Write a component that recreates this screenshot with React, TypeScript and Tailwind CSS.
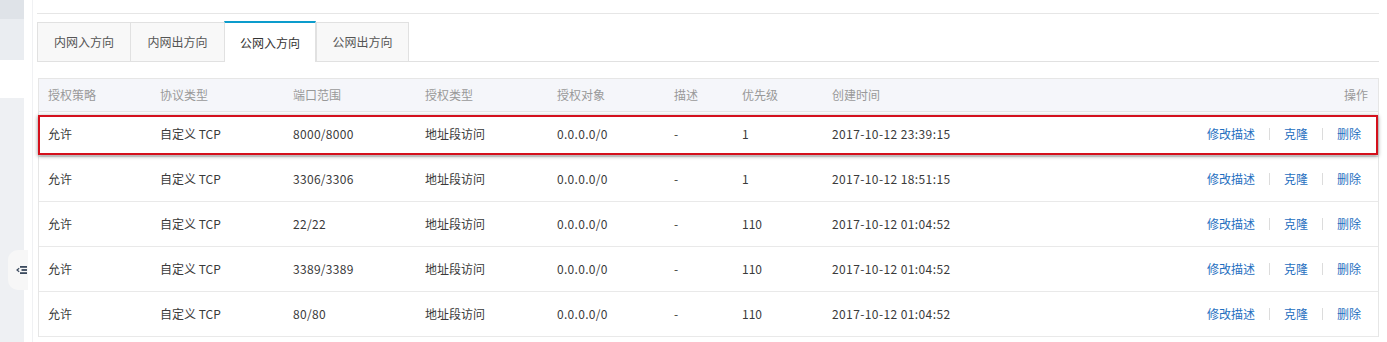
import React from "react";

const rows = [
  { port: "8000/8000", pri: "1", time: "2017-10-12 23:39:15" },
  { port: "3306/3306", pri: "1", time: "2017-10-12 18:51:15" },
  { port: "22/22", pri: "110", time: "2017-10-12 01:04:52" },
  { port: "3389/3389", pri: "110", time: "2017-10-12 01:04:52" },
  { port: "80/80", pri: "110", time: "2017-10-12 01:04:52" },
];

const cols = "grid grid-cols-[112px_133px_132px_132px_117px_68px_90px_1fr_auto] items-center pl-[9px]";

function Actions() {
  return (
    <div className="flex items-center pr-[17px] text-[#1f6fbf]">
      <span>修改描述</span>
      <span className="mx-[14px] h-[12px] w-px bg-[#dcdcdc]" />
      <span>克隆</span>
      <span className="mx-[14px] h-[12px] w-px bg-[#dcdcdc]" />
      <span>删除</span>
    </div>
  );
}

export default function App() {
  const tabs = ["内网入方向", "内网出方向", "公网入方向", "公网出方向"];
  const widths = ["w-[93px]", "w-[94px]", "w-[92px]", "w-[93px]"];
  return (
    <div
      className="flex w-[1387px] h-[342px] overflow-hidden bg-white text-[12px] text-[#3a3a3a]"
      style={{ fontFamily: '"Noto Sans CJK SC", "Liberation Sans", sans-serif' }}
    >
      <div className="flex w-[24px] flex-col">
        <div className="h-[19px] bg-[#dfe3e8]" />
        <div className="h-[41px] bg-[#eaedf1]" />
        <div className="h-[38px] bg-white" />
        <div className="relative flex-1 bg-[#eef0f3]">
          <div className="absolute left-[8px] top-[152px] flex h-[40px] w-[20px] items-center justify-end rounded-l-[10px] bg-[#f7f7f7] pr-[1px]">
            <svg width="11" height="10" viewBox="0 0 11 10">
              <rect x="4" y="1" width="7" height="1.8" fill="#3b4a5e" />
              <rect x="5.5" y="4.1" width="5.5" height="1.8" fill="#3b4a5e" />
              <rect x="4" y="7.2" width="7" height="1.8" fill="#3b4a5e" />
              <path d="M3.2 3.2 L1 5 L3.2 6.8" stroke="#3b4a5e" strokeWidth="1.2" fill="none" />
            </svg>
          </div>
        </div>
      </div>
      <div className="w-[9px] border-r border-[#f0f1f3]" />
      <div className="ml-[4px] w-[1342px]">
        <div className="mt-[13px] h-px bg-[#e6e6e6]" />
        <div className="mt-[8px] flex h-[40px] items-end border-b border-[#e1e1e1]">
          {tabs.map((t, i) =>
            i === 2 ? (
              <div
                key={t}
                className={`${widths[i]} -mb-px flex h-[41px] items-center justify-center border-x border-t-2 border-x-[#e1e1e1] border-t-[#0c9ccc] bg-white text-[#333]`}
              >
                {t}
              </div>
            ) : (
              <div
                key={t}
                className={`${widths[i]} flex h-[39px] items-center justify-center border-l border-t border-[#e1e1e1] ${i === 3 ? "border-r" : ""} bg-[#f8f8f8] text-[#555]`}
              >
                {t}
              </div>
            )
          )}
        </div>
        <div className="mt-[16px] ml-px border border-[#e6e6e6] border-b-0">
          <div className={`${cols} h-[33px] border-b border-[#e6e6e6] bg-[#f5f6fa] text-[#999]`}>
            <span>授权策略</span>
            <span>协议类型</span>
            <span>端口范围</span>
            <span>授权类型</span>
            <span>授权对象</span>
            <span>描述</span>
            <span>优先级</span>
            <span>创建时间</span>
            <span className="pr-[10px] text-right">操作</span>
          </div>
          {rows.map((r, i) => (
            <div key={i} className={`${cols} relative h-[45px] border-b border-[#e9e9e9]`}>
              {i === 0 && (
                <div className="pointer-events-none absolute -left-px right-0 top-[3px] bottom-[1px] border-2 border-[#d4101c] shadow-[0_1px_4px_rgba(0,0,0,0.45)]" />
              )}
              <span>允许</span>
              <span>自定义 TCP</span>
              <span className="tracking-[0.3px]">{r.port}</span>
              <span>地址段访问</span>
              <span className="tracking-[0.3px]">0.0.0.0/0</span>
              <span>-</span>
              <span>{r.pri}</span>
              <span className="tracking-[0.4px]">{r.time}</span>
              <Actions />
            </div>
          ))}
        </div>
      </div>
    </div>
  );
}
